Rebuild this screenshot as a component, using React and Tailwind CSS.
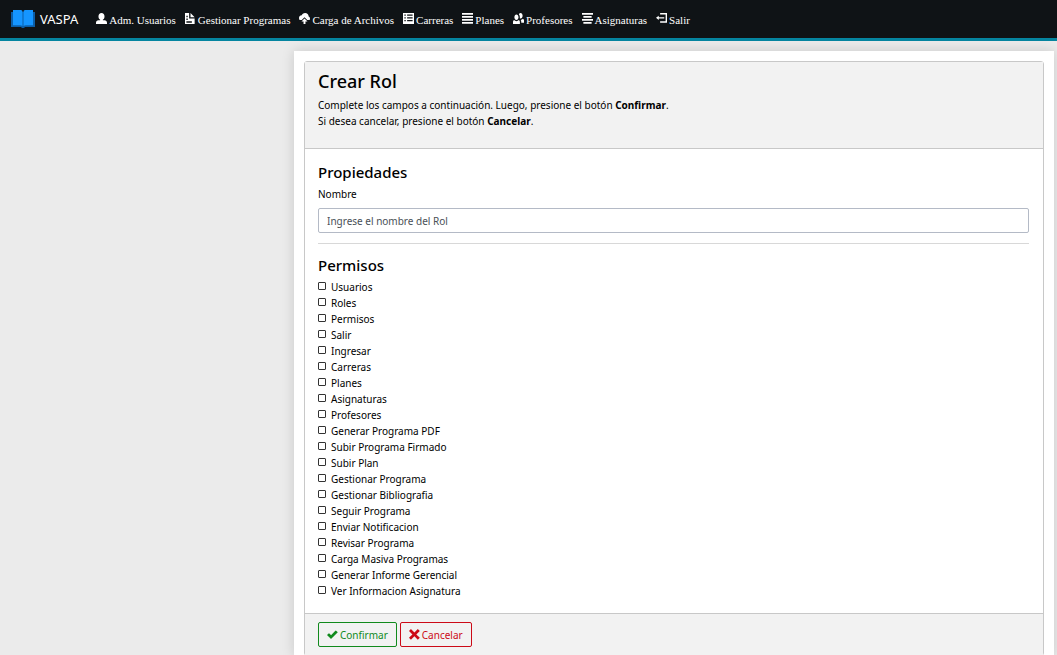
const oi = {
  person:
    "M4 0c-1.300 0-2.200 1.120-2.200 2.500 0 1 .5 1.900 1.200 2.300v.4h-1.200c-1.060.05-1.800.8-1.800 1.800v1h8v-1c0-1-.74-1.750-1.800-1.800h-1.200v-.4c.7-.4 1.200-1.300 1.200-2.300 0-1.380-.9-2.500-2.200-2.500z",
  document:
    "M0 0v8h7v-4h-4v-4h-3zm4 0v3h3l-3-3zm-3 2h1v1h-1v-1zm0 2h1v1h-1v-1zm0 2h4v1h-4v-1z",
  upload:
    "M4.5 0c-1.300 0-2.300.86-2.500 1.700-1.200 0-2 .9-2 2 0 .5.2.9.4 1.300h1.600l2-2 2 2h1.700c.2-.3.3-.5.3-.9 0-.75-.42-1.300-1-1.500v-.3c0-1.300-1.120-2.300-2.500-2.300zm-.5 4l-2.200 2.200h1.500v1.800h1.400v-1.800h1.500l-2.200-2.200z",
  spreadsheet: "M0 0h8v8h-8zm1 1v1h1v-1zm2 0v1h4v-1zm-2 2v1h1v-1zm2 0v1h4v-1zm-2 2v1h1v-1zm2 0v1h4v-1z",
  justify: "M0 0v1.200h8v-1.200zm0 2.200v1.200h8v-1.200zm0 2.200v1.200h8v-1.200zm0 2.200v1.200h8v-1.200z",
  people:
    "M5.5 0c-.51 0-.95.35-1.220.88.45.54.72 1.280.72 2.130 0 .29-.03.55-.09.81.19.11.38.19.59.19.83 0 1.500-.9 1.500-2s-.67-2-1.500-2zm-3 1c-.83 0-1.500.9-1.500 2s.67 2 1.500 2 1.500-.9 1.500-2-.67-2-1.500-2zm4.750 3.160c-.43.51-1.020.82-1.690.84.27.38.44.84.44 1.340v.66h2v-1.660c0-.52-.31-.97-.75-1.190zm-6.500 1c-.44.22-.75.67-.75 1.190v1.660h5v-1.660c0-.52-.31-.97-.75-1.190-.45.53-1.060.84-1.750.84s-1.300-.32-1.750-.84z",
  center: "M0 0v1.200h8v-1.200zm1 2.200v1.200h6v-1.200zm-1 2.200v1.200h8v-1.200zm1 2.200v1.200h6v-1.200z",
  logout: "M3 0v1h4v5h-4v1h5v-7h-5zm-1 2l-2 1.500 2 1.500v-1h4v-1h-4v-1z",
  check:
    "M6.410 1l-.69.72-2.780 2.780-.81-.78-.72-.72-1.410 1.410.72.72 1.500 1.500.69.72.72-.72 3.500-3.500.72-.72-1.410-1.410z",
  x: "M1.410 0l-1.410 1.410.72.72 1.780 1.810-1.780 1.780-.72.69 1.410 1.440.72-.72 1.810-1.810 1.780 1.810.69.72 1.440-1.440-.72-.69-1.810-1.780 1.810-1.810.72-.72-1.440-1.410-.69.72-1.780 1.780-1.810-1.780-.72-.72z",
};

function Icon({ name }) {
  return (
    <svg viewBox="0 0 8 8" className="size-[11px] shrink-0" fill="currentColor" aria-hidden="true">
      <path d={oi[name]} />
    </svg>
  );
}

function BookLogo() {
  return (
    <svg viewBox="0 0 24 18" className="h-[18px] w-6" aria-hidden="true">
      <path d="M0 2h24v15H14l-1 1h-2l-1-1H0z" fill="#0b5ea8" />
      <path d="M2 0h7c1.300 0 2.100.4 2.500 1v15c-.6-.6-1.400-.8-2.500-.8H2zM22 0h-7c-1.300 0-2.100.4-2.500 1v15c.6-.6 1.400-.8 2.500-.8h7z" fill="#1595ff" />
    </svg>
  );
}

const links = [
  ["person", "Adm. Usuarios"],
  ["document", "Gestionar Programas"],
  ["upload", "Carga de Archivos"],
  ["spreadsheet", "Carreras"],
  ["justify", "Planes"],
  ["people", "Profesores"],
  ["center", "Asignaturas"],
  ["logout", "Salir"],
];

const permisos = [
  "Usuarios",
  "Roles",
  "Permisos",
  "Salir",
  "Ingresar",
  "Carreras",
  "Planes",
  "Asignaturas",
  "Profesores",
  "Generar Programa PDF",
  "Subir Programa Firmado",
  "Subir Plan",
  "Gestionar Programa",
  "Gestionar Bibliografia",
  "Seguir Programa",
  "Enviar Notificacion",
  "Revisar Programa",
  "Carga Masiva Programas",
  "Generar Informe Gerencial",
  "Ver Informacion Asignatura",
];

export default function App() {
  return (
    <div className="flex min-h-screen flex-col bg-[#ebebeb] font-['Noto_Sans','Open_Sans',sans-serif] text-[10px] leading-4 text-black">
      <header className="flex h-[41px] items-center gap-[18px] border-b-3 border-[#0585a0] bg-[#0f1316] pl-[11px] text-white">
        <a href="#" className="flex items-center gap-[5px] text-[13px]">
          <BookLogo />
          VASPA
        </a>
        <nav className="flex items-center gap-[9px] pt-[2px] font-['Liberation_Serif',serif] text-[11px]">
          {links.map(([icon, label]) => (
            <a key={label} href="#" className="flex items-start gap-[2px] whitespace-nowrap">
              <span className="pt-px">
                <Icon name={icon} />
              </span>
              {label}
            </a>
          ))}
        </nav>
      </header>

      <main className="mt-[10px] mr-[3px] ml-[294px] grow bg-white px-[10px] pt-[10px] shadow-[0_0_12px_rgba(0,0,0,0.15)]">
        <form className="rounded-[3px] border border-[#c8c8c8]" onSubmit={(e) => e.preventDefault()}>
          <div className="border-b border-[#c8c8c8] bg-[#f2f2f2] px-[13px] pt-[7px] pb-[19px]">
            <h1 className="mb-1 text-[18px] leading-6 font-medium">Crear Rol</h1>
            <p>
              Complete los campos a continuación. Luego, presione el botón <b>Confirmar</b>.
              <br />
              Si desea cancelar, presione el botón <b>Cancelar</b>.
            </p>
          </div>

          <div className="pt-[13px] pr-[14px] pb-[14px] pl-[13px]">
            <h2 className="mb-1 text-[15px] leading-5 font-medium">Propiedades</h2>
            <label htmlFor="nombre" className="mb-[6px] block">
              Nombre
            </label>
            <input
              id="nombre"
              type="text"
              placeholder="Ingrese el nombre del Rol"
              className="block h-[25px] w-full rounded-[2px] border border-[#b4bac6] bg-white px-2 placeholder:text-[#495057]"
            />
            <hr className="mt-[10px] mb-[11px] border-[#d8d8d8]" />
            <h2 className="mb-1 text-[15px] leading-5 font-medium">Permisos</h2>
            {permisos.map((p) => (
              <label key={p} className="flex items-start gap-[5px]">
                <input
                  type="checkbox"
                  className="mt-[3px] size-2 appearance-none rounded-[1px] border border-[#333] bg-white checked:bg-[#333]"
                />
                {p}
              </label>
            ))}
          </div>

          <div className="flex gap-[3px] border-t border-[#c8c8c8] bg-[#f2f2f2] px-[13px] py-2">
            <button type="submit" className="flex h-[25px] items-center gap-[2px] rounded-[2px] border border-[#118a1d] px-2 text-[#118a1d]">
              <Icon name="check" />
              Confirmar
            </button>
            <button type="button" className="flex h-[25px] items-center gap-[2px] rounded-[2px] border border-[#cc0a17] px-2 text-[#cc0a17]">
              <Icon name="x" />
              Cancelar
            </button>
          </div>
        </form>
      </main>
    </div>
  );
}
